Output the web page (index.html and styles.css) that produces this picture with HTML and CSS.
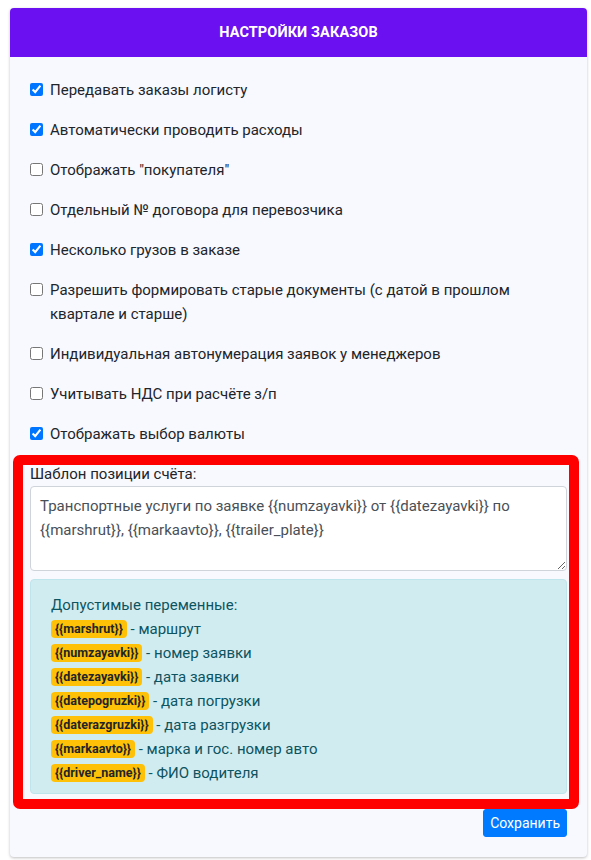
FILE: index.html
```html
<!DOCTYPE html>
<html lang="ru">
<head>
<meta charset="utf-8">
<title>Настройки заказов</title>
<link rel="stylesheet" href="styles.css">
</head>
<body>
<div class="card">
  <div class="card-header">НАСТРОЙКИ ЗАКАЗОВ</div>
  <div class="card-body">
    <label class="check"><input type="checkbox" checked><span>Передавать заказы логисту</span></label>
    <label class="check"><input type="checkbox" checked><span>Автоматически проводить расходы</span></label>
    <label class="check"><input type="checkbox"><span>Отображать "покупателя"</span></label>
    <label class="check"><input type="checkbox"><span>Отдельный № договора для перевозчика</span></label>
    <label class="check"><input type="checkbox" checked><span>Несколько грузов в заказе</span></label>
    <label class="check"><input type="checkbox"><span>Разрешить формировать старые документы (с датой в прошлом квартале и старше)</span></label>
    <label class="check"><input type="checkbox"><span>Индивидуальная автонумерация заявок у менеджеров</span></label>
    <label class="check"><input type="checkbox"><span>Учитывать НДС при расчёте з/п</span></label>
    <label class="check"><input type="checkbox" checked><span>Отображать выбор валюты</span></label>

    <div class="group">
      <div class="highlight"></div>
      <label class="group-label" for="tpl">Шаблон позиции счёта:</label>
      <textarea id="tpl" class="textarea">Транспортные услуги по заявке {{numzayavki}} от {{datezayavki}} по {{marshrut}}, {{markaavto}}, {{trailer_plate}}</textarea>
      <div class="alert">
        <div class="line">Допустимые переменные:</div>
        <div class="line"><span class="badge">{{marshrut}}</span> - маршрут</div>
        <div class="line"><span class="badge">{{numzayavki}}</span> - номер заявки</div>
        <div class="line"><span class="badge">{{datezayavki}}</span> - дата заявки</div>
        <div class="line"><span class="badge">{{datepogruzki}}</span> - дата погрузки</div>
        <div class="line"><span class="badge">{{daterazgruzki}}</span> - дата разгрузки</div>
        <div class="line"><span class="badge">{{markaavto}}</span> - марка и гос. номер авто</div>
        <div class="line"><span class="badge">{{driver_name}}</span> - ФИО водителя</div>
      </div>
    </div>

    <div class="actions"><button class="btn" type="button">Сохранить</button></div>
  </div>
</div>
</body>
</html>
```

FILE: styles.css
```css
* { box-sizing: border-box; }
html, body { margin: 0; padding: 0; background: #ffffff; }
body {
  font-family: "Source Sans Pro", Roboto, "Liberation Sans", sans-serif;
  font-size: 15px;
  color: #212529;
  padding: 8px 4px 4px 10px;
}
.card {
  width: 577px;
  background: #f8f8ff;
  border-radius: 4px;
  box-shadow: 0 1px 3px rgba(0,0,0,0.25);
}
.card-header {
  height: 49px;
  background: #6a10f1;
  color: #ffffff;
  font-weight: 700;
  font-size: 14.5px;
  display: flex;
  align-items: center;
  justify-content: center;
  border-radius: 4px 4px 0 0;
  letter-spacing: 0.1px;
}
.card-body {
  padding: 21px 20px 20px 20px;
  display: flex;
  flex-direction: column;
}
.check {
  display: flex;
  align-items: flex-start;
  line-height: 24px;
  margin-bottom: 16px;
}
.check input {
  width: 13px;
  height: 13px;
  margin: 5px 7px 0 0;
  flex: none;
}
.group {
  position: relative;
  display: flex;
  flex-direction: column;
}
.highlight {
  position: absolute;
  top: -7px;
  left: -17px;
  right: -12px;
  bottom: -15px;
  border: 10px solid #ff0000;
  border-radius: 7px;
  pointer-events: none;
  z-index: 2;
}
.group-label {
  line-height: 24px;
  color: #212529;
}
.textarea {
  display: block;
  width: 100%;
  height: 85px;
  padding: 7px 9px;
  font-family: inherit;
  font-size: 15px;
  line-height: 24px;
  color: #495057;
  background: #ffffff;
  border: 1px solid #ced4da;
  border-radius: 4px;
  resize: vertical;
  margin: 0 0 8px 0;
}
.alert {
  background: #d1ecf1;
  border: 1px solid #bee5eb;
  border-radius: 4px;
  color: #0c5460;
  padding: 13px 20px 8px 20px;
}
.line {
  line-height: 24px;
}
.badge {
  display: inline-block;
  background: #ffc107;
  color: #212529;
  font-weight: 700;
  font-size: 12.5px;
  line-height: 18px;
  padding: 0 4px;
  border-radius: 4px;
  vertical-align: 1px;
}
.actions {
  display: flex;
  justify-content: flex-end;
  margin-top: 15px;
}
.btn {
  font-family: inherit;
  font-size: 14px;
  line-height: 20px;
  color: #ffffff;
  background: #007bff;
  border: 1px solid #007bff;
  border-radius: 3px;
  padding: 3px 6px;
  height: 28px;
}
```
